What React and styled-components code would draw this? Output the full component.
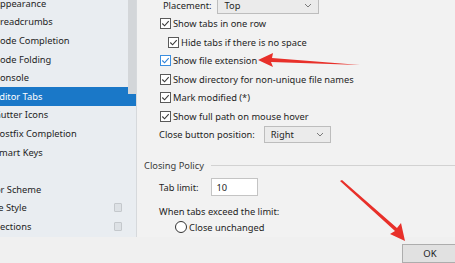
import React from "react";
import styled, { createGlobalStyle } from "styled-components";

const Global = createGlobalStyle`
  html, body { margin: 0; padding: 0; }
  body {
    width: 455px;
    height: 263px;
    overflow: hidden;
    background: #f0f0f0;
    font-family: "Noto Sans", "Liberation Sans", sans-serif;
    font-size: 9.3px;
    color: #1e1e1e;
  }
`;

const Window = styled.div`
  position: relative;
  width: 455px;
  height: 263px;
  overflow: hidden;
  display: flex;
  flex-direction: column;
  background: #f0f0f0;
`;

const Body = styled.div`
  display: flex;
  height: 237px;
  overflow: hidden;
`;

const Sidebar = styled.div`
  position: relative;
  width: 136px;
  flex: none;
  background: #e9edf1;
  border-right: 1px solid #d6d9dc;
  overflow: hidden;
`;

const TreeList = styled.ul`
  list-style: none;
  margin: -6px 0 0 0;
  padding: 0;
`;

const TreeItem = styled.li`
  display: flex;
  align-items: center;
  justify-content: space-between;
  height: 18.6px;
  margin-left: ${(p) => (p.$level === 1 ? "-6px" : "-19px")};
  padding-right: 14px;
  white-space: nowrap;
  background: ${(p) => (p.$selected ? "#1a78c8" : "transparent")};
  color: ${(p) => (p.$selected ? "#ffffff" : "#1e1e1e")};
`;

const CopyMark = styled.span`
  width: 6px;
  height: 7px;
  border: 1px solid #c4c8cc;
  background: #dde1e5;
  border-radius: 1px;
`;

const ScrollThumb = styled.div`
  position: absolute;
  top: 0;
  right: 0;
  width: 8px;
  height: 94px;
  background: #d3d6d9;
`;

const Content = styled.div`
  flex: 1;
  background: #f2f2f2;
  padding-left: 8px;
  overflow: hidden;
`;

const Stack = styled.div`
  display: flex;
  flex-direction: column;
  margin-top: -4px;
`;

const Row = styled.div`
  display: flex;
  align-items: center;
  gap: ${(p) => p.$gap ?? 6}px;
  height: ${(p) => p.$h ?? 18.5}px;
  padding-left: ${(p) => p.$indent || 0}px;
  white-space: nowrap;
`;

const Combo = styled.div`
  display: flex;
  align-items: center;
  justify-content: space-between;
  box-sizing: border-box;
  width: ${(p) => p.$w}px;
  height: 17px;
  padding: 0 6px;
  background: #ebebeb;
  border: 1px solid #bdbdbd;
  color: #1e1e1e;
`;

const Chevron = () => (
  <svg width="8" height="5" viewBox="0 0 8 5">
    <path d="M1 1 L4 4 L7 1" stroke="#7a7a7a" strokeWidth="1" fill="none" />
  </svg>
);

const Box = styled.span`
  box-sizing: border-box;
  width: 11px;
  height: 11px;
  flex: none;
  background: #ffffff;
  border: 1px solid ${(p) => (p.$focus ? "#3b8ee0" : "#5a5a5a")};
  display: flex;
  align-items: center;
  justify-content: center;
`;

const Check = ({ focus }) => (
  <Box $focus={focus}>
    <svg width="9" height="9" viewBox="0 0 9 9">
      <path
        d="M1.3 4.5 L3.6 6.8 L7.7 2.2"
        stroke={focus ? "#2b7fd6" : "#3a3a3a"}
        strokeWidth="1.1"
        fill="none"
      />
    </svg>
  </Box>
);

const Radio = styled.span`
  box-sizing: border-box;
  width: 12px;
  height: 12px;
  border-radius: 50%;
  border: 1px solid #333;
  background: #fff;
  flex: none;
`;

const SectionHead = styled.div`
  display: flex;
  align-items: center;
  gap: 7px;
  height: 18px;
  margin: 12px 0 4px -1px;
  color: #3a3a3a;
  &::after {
    content: "";
    flex: 1;
    height: 1px;
    background: #d2d2d2;
  }
`;

const Field = styled.div`
  box-sizing: border-box;
  width: 47px;
  height: 18px;
  padding: 0 5px;
  display: flex;
  align-items: center;
  background: #fff;
  border: 1px solid #c4c4c4;
  margin-left: 6px;
`;

const Footer = styled.div`
  flex: 1;
  display: flex;
  justify-content: flex-end;
  align-items: flex-end;
  background: #f0f0f0;
`;

const OkButton = styled.button`
  box-sizing: border-box;
  width: 56px;
  height: 19px;
  margin-right: -3px;
  border: 1px solid #adadad;
  background: #e1e1e1;
  font-family: "Noto Sans", "Liberation Sans", sans-serif;
  font-size: 9.5px;
  color: #1e1e1e;
  padding: 0;
`;

const Overlay = styled.svg`
  position: absolute;
  left: 0;
  top: 0;
  pointer-events: none;
`;

const tree = [
  { t: "Appearance", l: 1 },
  { t: "Breadcrumbs", l: 1 },
  { t: "Code Completion", l: 1 },
  { t: "Code Folding", l: 1 },
  { t: "Console", l: 1 },
  { t: "Editor Tabs", l: 1, sel: true },
  { t: "Gutter Icons", l: 1 },
  { t: "Postfix Completion", l: 1 },
  { t: "Smart Keys", l: 1 },
  { t: "", l: 1 },
  { t: "Color Scheme", l: 0 },
  { t: "Code Style", l: 0, copy: true },
  { t: "Inspections", l: 0, copy: true },
];

export default function App() {
  return (
    <Window>
      <Global />
      <Body>
        <Sidebar>
          <TreeList>
            {tree.map((it, i) => (
              <TreeItem key={i} $level={it.l} $selected={it.sel}>
                <span>{it.t}</span>
                {it.copy && <CopyMark />}
              </TreeItem>
            ))}
          </TreeList>
          <ScrollThumb />
        </Sidebar>
        <Content>
          <Stack>
            <Row $indent={18}>
              <span>Placement:</span>
              <Combo $w={102}>
                <span>Top</span>
                <Chevron />
              </Combo>
            </Row>
            <Row $indent={15} $gap={2}>
              <Check />
              <span>Show tabs in one row</span>
            </Row>
            <Row $indent={23} $gap={2}>
              <Check />
              <span>Hide tabs if there is no space</span>
            </Row>
            <Row $indent={15} $gap={2}>
              <Check focus />
              <span>Show file extension</span>
            </Row>
            <Row $indent={15} $gap={2}>
              <Check />
              <span>Show directory for non-unique file names</span>
            </Row>
            <Row $indent={15} $gap={2}>
              <Check />
              <span>Mark modified (*)</span>
            </Row>
            <Row $indent={15} $gap={2}>
              <Check />
              <span>Show full path on mouse hover</span>
            </Row>
            <Row $indent={14} $gap={9}>
              <span>Close button position:</span>
              <Combo $w={67}>
                <span>Right</span>
                <Chevron />
              </Combo>
            </Row>
            <SectionHead>Closing Policy</SectionHead>
            <Row $indent={14}>
              <span>Tab limit:</span>
              <Field>10</Field>
            </Row>
            <Row $indent={14} style={{ marginTop: 6 }}>
              <span>When tabs exceed the limit:</span>
            </Row>
            <Row $indent={30} $gap={2} $h={12}>
              <Radio />
              <span>Close unchanged</span>
            </Row>
          </Stack>
        </Content>
      </Body>
      <Footer>
        <OkButton>OK</OkButton>
      </Footer>
      <Overlay width="455" height="263" viewBox="0 0 455 263">
        <polygon points="258,60 273,53 272,58 360,65 271,62 273,67" fill="#e8302a" />
        <polygon points="340,181 342,180 397,228 401,223 405,241 390,234 395,231" fill="#e8302a" />
      </Overlay>
    </Window>
  );
}
